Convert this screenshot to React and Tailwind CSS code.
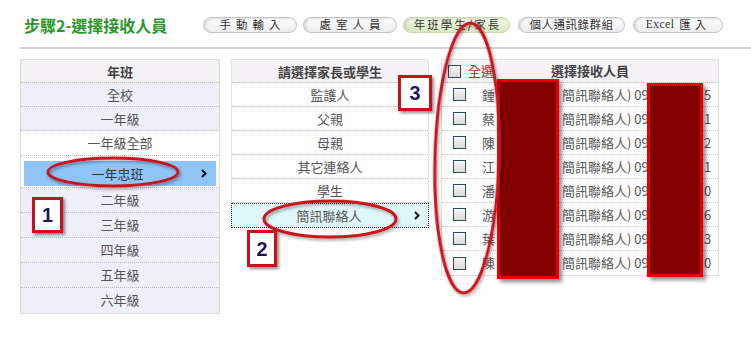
import React from "react";

const font = "font-['Noto_Sans_CJK_TC','Noto_Sans',sans-serif]";

const Chevron = () => (
  <svg width="6" height="9" viewBox="0 0 6 9" className="shrink-0">
    <path d="M1 1 L4.5 4.5 L1 8" fill="none" stroke="#111" strokeWidth="2" />
  </svg>
);

const Checkbox = ({ className = "" }) => (
  <span
    className={`inline-block w-[13px] h-[13px] shrink-0 border border-[#2f4b5a] bg-gradient-to-b from-[#f6f6f6] to-[#dadada] ${className}`}
  />
);

const TabButton = ({ label, width, active, tracking }) => (
  <div
    className={`h-[16px] ${width} flex items-center justify-center rounded-full border text-[11.5px] leading-none text-[#333] shadow-[inset_2px_1px_2px_rgba(0,0,0,0.12)] ${tracking} ${
      active
        ? "border-[#c9dcb0] bg-gradient-to-b from-[#eef6e2] to-[#d9eac4]"
        : "border-[#c4c4c4] bg-gradient-to-b from-white to-[#ececec]"
    }`}
  >
    {label}
  </div>
);

const leftTop = ["全校", "一年級"];
const leftBottom = ["二年級", "三年級", "四年級", "五年級", "六年級"];
const relations = ["監護人", "父親", "母親", "其它連絡人", "學生"];
const contacts = [
  { n: "鍾", d: "5" },
  { n: "蔡", d: "1" },
  { n: "陳", d: "2" },
  { n: "江", d: "1" },
  { n: "潘", d: "0" },
  { n: "游", d: "6" },
  { n: "葉", d: "3" },
  { n: "陳", d: "0" },
];

const NumberTag = ({ n, className }) => (
  <div
    className={`absolute flex items-center justify-center border-[3px] border-[#c8121b] bg-white shadow-[2px_2px_3px_rgba(0,0,0,0.45)] font-['Liberation_Sans',sans-serif] font-bold text-[20px] text-[#17175e] ${className}`}
  >
    {n}
  </div>
);

export default function App() {
  return (
    <div className={`relative w-[751px] h-[349px] overflow-hidden bg-white ${font}`}>
      {/* title + tabs */}
      <div className="flex items-center h-[18px] mt-[16px] pl-[24px]">
        <div className="w-[179px] text-[16px] leading-[18px] font-bold text-[#2c982c]">
          步驟2-選擇接收人員
        </div>
        <TabButton label="手動輸入" width="w-[94px]" tracking="tracking-[5px] pl-[5px]" />
        <div className="w-[6px]" />
        <TabButton label="處室人員" width="w-[94px]" tracking="tracking-[5px] pl-[5px]" />
        <div className="w-[6px]" />
        <TabButton label="年班學生/家長" width="w-[107px]" tracking="tracking-[2px] pl-[2px]" active />
        <div className="w-[8px]" />
        <TabButton label="個人通訊錄群組" width="w-[107px]" tracking="tracking-[0.5px]" />
        <div className="w-[8px]" />
        <TabButton
          label={
            <>
              <span className="font-['Liberation_Serif',serif] tracking-[0.5px] mr-[5px]">Excel</span>
              <span className="tracking-[4px]">匯入</span>
            </>
          }
          width="w-[90px]"
          tracking=""
        />
      </div>

      <div className="ml-[20px] mt-[13px] h-[2px] bg-[#d2d2d2]" />

      {/* panels */}
      <div className="flex items-start pl-[20px] mt-[10px] text-[13px] text-[#555]">
        {/* 年班 */}
        <div className="w-[200px] border border-[#dfdcdf] bg-[#efeffa]">
          <div className="h-[23px] leading-[23px] text-center font-bold text-[#444] bg-[#f4f2f4] border-b border-dotted border-[#bbb]">
            年班
          </div>
          {leftTop.map((t) => (
            <div key={t} className="h-[24px] leading-[23px] text-center border-b border-dotted border-[#bbb]">
              {t}
            </div>
          ))}
          <div className="h-[25px] leading-[24px] text-center bg-white border-b border-dotted border-[#bbb]">
            一年級全部
          </div>
          <div className="h-[32px] px-[3px] pt-[5px] bg-white border-b border-dotted border-[#bbb]">
            <div className="h-[25px] flex items-center bg-[#8ec4f8] pl-[10px] pr-[9px] text-[#333]">
              <span className="flex-1 text-center">一年忠班</span>
              <Chevron />
            </div>
          </div>
          {leftBottom.map((t, i) => (
            <div
              key={t}
              className={`h-[25px] leading-[24px] text-center ${i < leftBottom.length - 1 ? "border-b border-dotted border-[#bbb]" : ""}`}
            >
              {t}
            </div>
          ))}
        </div>

        {/* 家長或學生 */}
        <div className="w-[198px] ml-[11px] border-t border-x border-[#e4e2e4]">
          <div className="h-[23px] leading-[23px] text-center font-bold text-[#444] bg-[#f4f2f4] border-b border-dotted border-[#bbb]">
            請選擇家長或學生
          </div>
          {relations.map((t) => (
            <div key={t} className="h-[24px] leading-[23px] text-center bg-white border-b border-dotted border-[#bbb]">
              {t}
            </div>
          ))}
          <div className="-mx-px h-[25px] flex items-center border border-dotted border-[#222] bg-[#dff7fb] pl-[12px] pr-[8px]">
            <span className="flex-1 text-center">簡訊聯絡人</span>
            <Chevron />
          </div>
        </div>

        {/* 選擇接收人員 */}
        <div className="w-[278px] ml-[12px] border border-[#e2e0e2]">
          <div className="h-[23px] flex items-center bg-[#f4f2f4] border-b border-dotted border-[#bbb]">
            <Checkbox className="ml-[6px]" />
            <span className="ml-[7px] w-[26px] text-[#b02a2a]">全選</span>
            <span className="ml-[57px] font-bold text-[#444]">選擇接收人員</span>
          </div>
          {contacts.map((c, i) => (
            <div
              key={i}
              className={`h-[24px] flex items-center whitespace-nowrap ${i < contacts.length - 1 ? "border-b border-dotted border-[#c8c8c8]" : ""}`}
            >
              <Checkbox className="ml-[11px]" />
              <span className="ml-[16px] w-[80px] shrink-0">{c.n}</span>
              <span className="w-[88px] shrink-0">簡訊聯絡人) 09</span>
              <span className="w-[54px] shrink-0" />
              <span className="shrink-0">{c.d}</span>
            </div>
          ))}
        </div>
      </div>

      {/* redaction blocks */}
      <div className="absolute left-[497px] top-[79px] w-[62px] h-[200px] bg-[#800000] border-[3px] border-[#e60000] shadow-[3px_3px_4px_rgba(0,0,0,0.45)]" />
      <div className="absolute left-[647px] top-[83px] w-[56px] h-[194px] bg-[#800000] border-[3px] border-[#e60000] shadow-[3px_3px_4px_rgba(0,0,0,0.45)]" />

      {/* annotation ellipses */}
      <svg className="absolute inset-0 pointer-events-none" width="751" height="349">
        <defs>
          <filter id="sh" x="-20%" y="-20%" width="140%" height="140%">
            <feDropShadow dx="1.5" dy="2" stdDeviation="1.5" floodColor="#000" floodOpacity="0.35" />
          </filter>
        </defs>
        <g fill="none" stroke="#c8141c" strokeWidth="3" filter="url(#sh)">
          <ellipse cx="113" cy="172" rx="65" ry="14" />
          <ellipse cx="330" cy="219" rx="66" ry="18" />
          <ellipse cx="467" cy="158" rx="32" ry="135" transform="rotate(1.5 467 158)" />
        </g>
      </svg>

      <NumberTag n="1" className="left-[32px] top-[197px] w-[31px] h-[36px]" />
      <NumberTag n="2" className="left-[247px] top-[230px] w-[30px] h-[37px]" />
      <NumberTag n="3" className="left-[398px] top-[75px] w-[34px] h-[36px]" />
    </div>
  );
}
